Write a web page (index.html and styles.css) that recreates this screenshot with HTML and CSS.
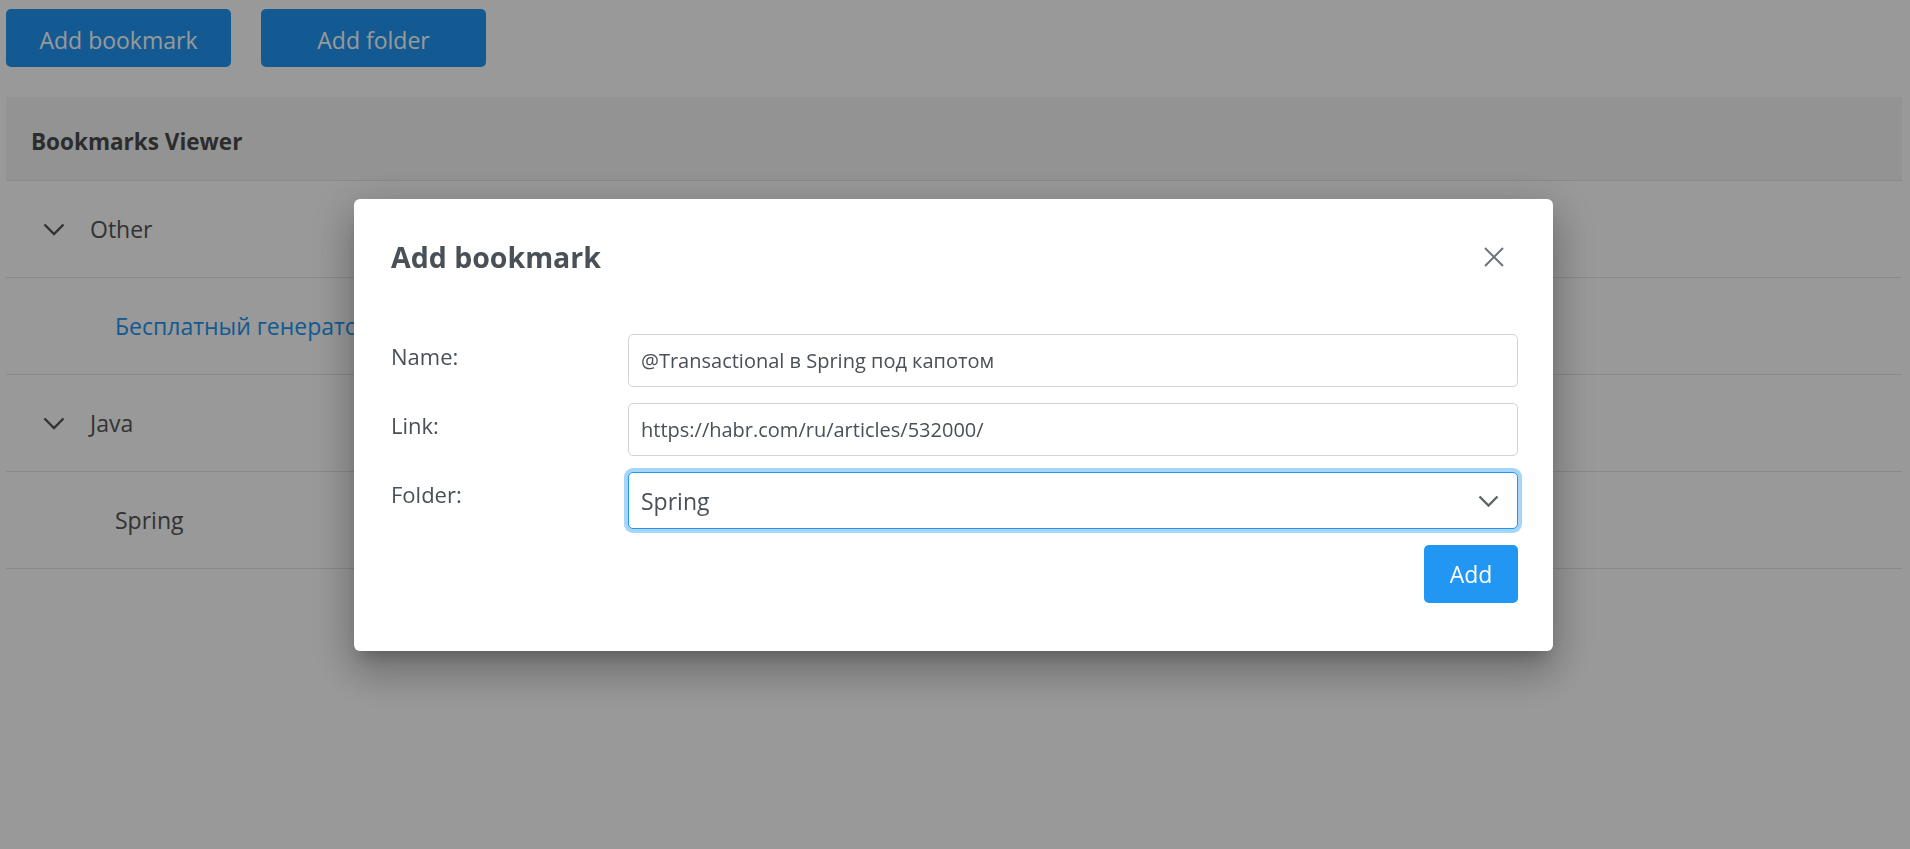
FILE: index.html
```html
<!DOCTYPE html>
<html lang="ru">
<head>
<meta charset="utf-8">
<title>Bookmarks Viewer</title>
<link rel="stylesheet" href="styles.css">
</head>
<body>
<div class="page">
  <div class="toolbar">
    <button class="btn btn-primary btn-top">Add bookmark</button>
    <button class="btn btn-primary btn-top">Add folder</button>
  </div>
  <div class="card">
    <div class="card-header">Bookmarks Viewer</div>
    <div class="tree-row folder">
      <svg class="chev" width="22" height="13" viewBox="0 0 22 13"><path d="M1.5 1.5 L11 11 L20.5 1.5" fill="none" stroke="currentColor" stroke-width="2.4"/></svg>
      <span>Other</span>
    </div>
    <div class="tree-row child"><a class="link" href="#">Бесплатный генератор паролей</a></div>
    <div class="tree-row folder">
      <svg class="chev" width="22" height="13" viewBox="0 0 22 13"><path d="M1.5 1.5 L11 11 L20.5 1.5" fill="none" stroke="currentColor" stroke-width="2.4"/></svg>
      <span>Java</span>
    </div>
    <div class="tree-row child"><span>Spring</span></div>
  </div>
</div>

<div class="backdrop">
  <div class="modal">
    <div class="modal-header">
      <h5 class="modal-title">Add bookmark</h5>
      <button class="close" aria-label="Close">
        <svg width="20" height="20" viewBox="0 0 20 20"><path d="M1 1 L19 19 M19 1 L1 19" fill="none" stroke="currentColor" stroke-width="2"/></svg>
      </button>
    </div>
    <form class="form">
      <label class="form-label">Name:</label>
      <input class="form-control" type="text" value="@Transactional в Spring под капотом">
      <label class="form-label">Link:</label>
      <input class="form-control" type="text" value="https://habr.com/ru/articles/532000/">
      <label class="form-label">Folder:</label>
      <div class="select-wrap">
        <select class="form-select"><option>Spring</option></select>
        <svg class="select-chev" width="21" height="13" viewBox="0 0 21 13"><path d="M1.5 1.5 L10.5 10.5 L19.5 1.5" fill="none" stroke="currentColor" stroke-width="2.4"/></svg>
      </div>
      <div class="form-actions">
        <button type="button" class="btn btn-primary btn-add">Add</button>
      </div>
    </form>
  </div>
</div>
</body>
</html>
```

FILE: styles.css
```css
* { box-sizing: border-box; }

html, body {
  margin: 0;
  padding: 0;
  background: #ffffff;
  font-family: "Open Sans", "Noto Sans", sans-serif;
  color: #444;
}

.page {
  padding: 9px 8px 0 6px;
}

.toolbar {
  display: flex;
  gap: 30px;
}

.btn {
  font-family: inherit;
  border: none;
  border-radius: 5px;
  cursor: pointer;
}

.btn-primary {
  background: #2196f3;
  color: #ffffff;
}

.btn-top {
  width: 225px;
  height: 58px;
  font-size: 23px;
  padding: 4px 0 0;
}

.card {
  margin-top: 30px;
  background: #fff;
}

.card-header {
  height: 84px;
  display: flex;
  align-items: center;
  padding: 5px 0 0 25px;
  background: #f6f6f6;
  border-bottom: 1px solid #e4e4e4;
  font-weight: 700;
  font-size: 22.5px;
  color: #4a4a4a;
}

.tree-row {
  height: 97px;
  display: flex;
  align-items: center;
  border-bottom: 1px solid #e4e4e4;
  font-size: 23px;
  color: #555;
}

.tree-row.folder {
  padding-left: 37px;
  gap: 25px;
}

.chev { color: #555; flex: none; }

.tree-row.child {
  padding-left: 109px;
}

.link {
  color: #2196f3;
  text-decoration: none;
}

/* modal */
.backdrop {
  position: fixed;
  inset: 0;
  background: rgba(0, 0, 0, 0.4);
  display: flex;
  justify-content: flex-start;
  align-items: flex-start;
  padding: 199px 0 0 354px;
}

.modal {
  width: 1199px;
  background: #fff;
  border-radius: 6px;
  padding: 40px 35px 48px 37px;
  box-shadow: 0 11px 15px -7px rgba(0,0,0,0.22), 0 24px 38px 3px rgba(0,0,0,0.16), 0 9px 46px 8px rgba(0,0,0,0.14);
}

.modal-header {
  display: flex;
  align-items: center;
  justify-content: space-between;
  height: 36px;
  margin-bottom: 59px;
}

.modal-title {
  margin: 0;
  font-size: 28.5px;
  font-weight: 700;
  color: #495057;
}

.close {
  background: none;
  border: none;
  padding: 0;
  width: 20px;
  height: 20px;
  margin-right: 14px;
  color: #6c757d;
  display: flex;
}

.form {
  display: grid;
  grid-template-columns: 237px 1fr;
  row-gap: 16px;
}

.form-label {
  font-size: 22px;
  line-height: 36px;
  padding-top: 4px;
  color: #495057;
}

.form-control {
  height: 53px;
  border: 1px solid #ced4da;
  border-radius: 5px;
  padding: 0 12px;
  font-family: inherit;
  font-size: 20px;
  color: #495057;
  outline: none;
}

.select-wrap {
  position: relative;
}

.form-select {
  width: 100%;
  height: 57px;
  appearance: none;
  -webkit-appearance: none;
  border: 1px solid #2196f3;
  border-radius: 5px;
  box-shadow: 0 0 0 4px rgba(33, 150, 243, 0.4);
  padding: 0 12px;
  font-family: inherit;
  font-size: 23px;
  color: #495057;
  background: #fff;
  outline: none;
}

.select-chev {
  position: absolute;
  right: 19px;
  top: 23px;
  color: #5f6468;
  pointer-events: none;
}

.form-actions {
  grid-column: 1 / -1;
  display: flex;
  justify-content: flex-end;
}

.btn-add {
  width: 94px;
  height: 58px;
  font-size: 23px;
}
```
